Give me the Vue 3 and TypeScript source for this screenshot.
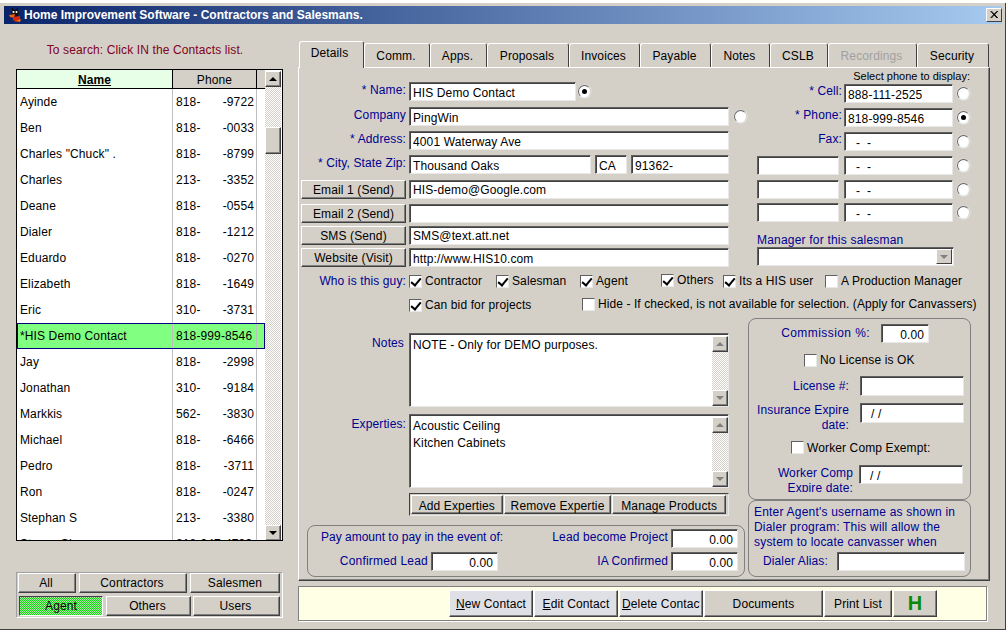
<script setup lang="ts">
interface Contact { name: string; a: string; b: string; selected?: boolean }
const contacts: Contact[] = [
  { name: 'Ayinde', a: '818-', b: '-9722' },
  { name: 'Ben', a: '818-', b: '-0033' },
  { name: 'Charles "Chuck" .', a: '818-', b: '-8799' },
  { name: 'Charles', a: '213-', b: '-3352' },
  { name: 'Deane', a: '818-', b: '-0554' },
  { name: 'Dialer', a: '818-', b: '-1212' },
  { name: 'Eduardo', a: '818-', b: '-0270' },
  { name: 'Elizabeth', a: '818-', b: '-1649' },
  { name: 'Eric', a: '310-', b: '-3731' },
  { name: '*HIS Demo Contact', a: '818-999-8546', b: '', selected: true },
  { name: 'Jay', a: '818-', b: '-2998' },
  { name: 'Jonathan', a: '310-', b: '-9184' },
  { name: 'Markkis', a: '562-', b: '-3830' },
  { name: 'Michael', a: '818-', b: '-6466' },
  { name: 'Pedro', a: '818-', b: '-3711' },
  { name: 'Ron', a: '818-', b: '-0247' },
  { name: 'Stephan S', a: '213-', b: '-3380' },
  { name: 'Stacey Sl', a: '818-947-4793', b: '' }
]
const tabs = [
  { label: 'Details', w: 65, active: true },
  { label: 'Comm.', w: 66 },
  { label: 'Apps.', w: 57 },
  { label: 'Proposals', w: 82 },
  { label: 'Invoices', w: 71 },
  { label: 'Payable', w: 71 },
  { label: 'Notes', w: 59 },
  { label: 'CSLB', w: 58 },
  { label: 'Recordings', w: 89, disabled: true },
  { label: 'Security', w: 72 }
]
</script>

<template>
  <div class="window">
    <div class="titlebar">
      <svg class="appicon" viewBox="0 0 16 16" width="16" height="16">
        <path d="M5 1 7 4M11 1 9 4" stroke="#000" stroke-width="1" fill="none" />
        <ellipse cx="8" cy="6" rx="4" ry="3.5" fill="#111" />
        <circle cx="6.5" cy="5" r="1" fill="#fff" />
        <circle cx="9.5" cy="5" r="1" fill="#fff" />
        <path d="M2 8 8 7 7 11 3 10Z" fill="#f06010" />
        <path d="M6 10 13 9 13 13 9 15 6 13Z" fill="#d82808" />
        <path d="M9 14 13 15 14 12Z" fill="#f08010" />
      </svg>
      <span class="title">Home Improvement Software - Contractors and Salesmans.</span>
      <span class="close">
        <svg viewBox="0 0 16 14" width="14" height="12"><path d="M4 2.5 11.5 10.5M5 2.5 12.5 10.5M11.5 2.5 4 10.5M12.5 2.5 5 10.5" stroke="#000" stroke-width="1.1" /></svg>
      </span>
    </div>

    <div class="main">
      <aside class="left">
        <div class="search">To search: Click IN the Contacts list.</div>
        <div class="table">
          <div class="list">
            <div class="thead">
              <div class="th-name">Name</div>
              <div class="th-phone">Phone</div>
            </div>
            <div v-for="c in contacts" :key="c.name" class="trow" :class="{ sel: c.selected }">
              <div class="td-name">{{ c.name }}</div>
              <div class="td-phone"><span>{{ c.a }}</span><span>{{ c.b }}</span></div>
            </div>
          </div>
          <div class="vscroll main-scroll">
            <div class="sbtn"><i class="tri up"></i></div>
            <div class="track-a"></div>
            <div class="thumb"></div>
            <div class="track-b"></div>
            <div class="sbtn"><i class="tri down"></i></div>
          </div>
        </div>
        <div class="filters">
          <div class="f-row f1">
            <button class="btn f-all">All</button>
            <button class="btn f-con">Contractors</button>
            <button class="btn f-sal">Salesmen</button>
          </div>
          <div class="f-row f2">
            <button class="btn f-agent">Agent</button>
            <button class="btn f-oth">Others</button>
            <button class="btn f-usr">Users</button>
          </div>
        </div>
      </aside>

      <section class="right">
        <div class="tabs">
          <div
            v-for="t in tabs"
            :key="t.label"
            class="tab"
            :class="{ active: t.active, disabled: t.disabled }"
            :style="{ width: t.w + 'px' }"
          >{{ t.label }}</div>
        </div>

        <div class="panel">
          <div class="upper">
            <div class="form">
              <div class="frow">
                <label class="lbl">* Name:</label>
                <div class="inp w-name">HIS Demo Contact</div>
                <span class="radio on r-name"></span>
              </div>
              <div class="frow">
                <label class="lbl">Company</label>
                <div class="inp w-full">PingWin</div>
                <span class="radio r-comp"></span>
              </div>
              <div class="frow">
                <label class="lbl">* Address:</label>
                <div class="inp w-full">4001 Waterway Ave</div>
              </div>
              <div class="frow">
                <label class="lbl">* City, State Zip:</label>
                <div class="inp w-city">Thousand Oaks</div>
                <div class="inp w-st">CA</div>
                <div class="inp w-zip">91362-</div>
              </div>
              <div class="frow">
                <button class="btn sidebtn">Email 1 (Send)</button>
                <div class="inp w-full high">HIS-demo@Google.com</div>
              </div>
              <div class="frow">
                <button class="btn sidebtn">Email 2 (Send)</button>
                <div class="inp w-full"></div>
              </div>
              <div class="frow">
                <button class="btn sidebtn">SMS (Send)</button>
                <div class="inp w-full high">SMS@text.att.net</div>
              </div>
              <div class="frow">
                <button class="btn sidebtn">Website (Visit)</button>
                <div class="inp w-full">http://www.HIS10.com</div>
              </div>
            </div>

            <div class="phones">
              <div class="select-label">Select phone to display:</div>
              <div class="pgrid">
                <div class="prow">
                  <label class="plbl">* Cell:</label>
                  <div class="inp w-ph">888-111-2525</div>
                  <span class="radio"></span>
                </div>
                <div class="prow">
                  <label class="plbl">* Phone:</label>
                  <div class="inp w-ph">818-999-8546</div>
                  <span class="radio on"></span>
                </div>
                <div class="prow">
                  <label class="plbl">Fax:</label>
                  <div class="inp w-ph dash">- &nbsp;-</div>
                  <span class="radio"></span>
                </div>
                <div class="prow">
                  <div class="inp w-ph2"></div>
                  <div class="inp w-ph dash">- &nbsp;-</div>
                  <span class="radio"></span>
                </div>
                <div class="prow">
                  <div class="inp w-ph2"></div>
                  <div class="inp w-ph dash">- &nbsp;-</div>
                  <span class="radio"></span>
                </div>
                <div class="prow">
                  <div class="inp w-ph2"></div>
                  <div class="inp w-ph dash">- &nbsp;-</div>
                  <span class="radio"></span>
                </div>
              </div>
              <div class="mgr-label">Manager for this salesman</div>
              <div class="inp combo">
                <span class="combo-btn"><i class="tri down gray"></i></span>
              </div>
            </div>
          </div>

          <div class="who-row first">
            <label class="who-lbl">Who is this guy:</label>
            <div class="cb w87"><span class="box on"></span>Contractor</div>
            <div class="cb w84"><span class="box on"></span>Salesman</div>
            <div class="cb w81"><span class="box on"></span>Agent</div>
            <div class="cb w62 raised"><span class="box on"></span>Others</div>
            <div class="cb w102"><span class="box on"></span>Its a HIS user</div>
            <div class="cb"><span class="box"></span>A Production Manager</div>
          </div>
          <div class="who-row second">
            <label class="who-lbl"></label>
            <div class="cb w173"><span class="box on"></span>Can bid for projects</div>
            <div class="cb raised tight"><span class="box"></span>Hide - If checked, is not available for selection. (Apply for Canvassers)</div>
          </div>

          <div class="lower">
            <div class="lower-left">
              <div class="area-row notes">
                <label class="lbl area-lbl notes-lbl">Notes</label>
                <div class="inp area">
                  <div class="area-text">NOTE - Only for DEMO purposes.</div>
                  <div class="vscroll">
                    <div class="sbtn"><i class="tri up gray"></i></div>
                    <div class="track-fill"></div>
                    <div class="sbtn"><i class="tri down gray"></i></div>
                  </div>
                </div>
              </div>
              <div class="area-row exp">
                <label class="lbl area-lbl">Experties:</label>
                <div class="inp area">
                  <div class="area-text">Acoustic Ceiling<br />Kitchen Cabinets</div>
                  <div class="vscroll">
                    <div class="sbtn"><i class="tri up gray"></i></div>
                    <div class="track-fill"></div>
                    <div class="sbtn"><i class="tri down gray"></i></div>
                  </div>
                </div>
              </div>
              <div class="exp-btns">
                <button class="btn eb1">Add Experties</button>
                <button class="btn eb2">Remove Expertie</button>
                <button class="btn eb3">Manage Products</button>
              </div>
              <div class="pay group">
                <div class="pay-row">
                  <span class="blue pay-title">Pay amount to pay in the event of:</span>
                  <div class="pay-item first-item">
                    <label class="blue">Lead become Project</label>
                    <div class="inp num w-pay">0.00</div>
                  </div>
                </div>
                <div class="pay-row second-pay">
                  <div class="pay-item">
                    <label class="blue conf-lbl">Confirmed Lead</label>
                    <div class="inp num w-pay">0.00</div>
                  </div>
                  <div class="pay-item">
                    <label class="blue">IA Confirmed</label>
                    <div class="inp num w-pay">0.00</div>
                  </div>
                </div>
              </div>
            </div>

            <div class="lower-right">
              <div class="group comm">
                <div class="c-row c-commission">
                  <label class="blue c-l1">Commission %:</label>
                  <div class="inp num w-comm">0.00</div>
                </div>
                <div class="cb c-nolic"><span class="box"></span>No License is OK</div>
                <div class="c-row c-lic">
                  <label class="blue c-l2 one">License #:</label>
                  <div class="inp w-lic tall"></div>
                </div>
                <div class="c-row c-ins">
                  <label class="blue c-l2 two">Insurance Expire<br />date:</label>
                  <div class="inp w-lic tall date">/ /</div>
                </div>
                <div class="cb c-exempt"><span class="box"></span>Worker Comp Exempt:</div>
                <div class="c-row c-wc">
                  <label class="blue c-l3 two">Worker Comp<br />Expire date:</label>
                  <div class="inp w-lic date">/ /</div>
                </div>
              </div>
              <div class="group dialer">
                <div class="blue dial-text">Enter Agent's username as shown in<br />Dialer program: This will allow the<br />system to locate canvasser when</div>
                <div class="dial-row">
                  <label class="blue dial-lbl">Dialer Alias:</label>
                  <div class="inp w-dial"></div>
                </div>
              </div>
            </div>
          </div>
        </div>

        <div class="actionbar">
          <button class="btn act lite w84"><span><u>N</u>ew Contact</span></button>
          <button class="btn act lite w84"><span><u>E</u>dit Contact</span></button>
          <button class="btn act lite w84 clip"><span><u>D</u>elete Contact</span></button>
          <button class="btn act w119"><span>Documents</span></button>
          <button class="btn act w68"><span>Print List</span></button>
          <button class="btn act w44 h"><span>H</span></button>
        </div>
      </section>
    </div>
  </div>
</template>

<style>
html, body { margin: 0; background: #fff; }
</style>

<style scoped>
* { box-sizing: border-box; }
.window {
  width: 1006px;
  height: 627px;
  margin-top: 3px;
  padding-top: 3px;
  background: #d4d0c8;
  border-right: 1px solid #404040;
  border-bottom: 1px solid #404040;
  font-family: "Liberation Sans", Arial, sans-serif;
  font-size: 12px;
  letter-spacing: 0.12px;
  color: #000;
  overflow: hidden;
}
.titlebar {
  margin-left: 4px;
  width: 998px;
  height: 18px;
  display: flex;
  align-items: center;
  background: linear-gradient(90deg, #0a246a, #a6caf0);
  position: relative;
}
.appicon { margin-left: 3px; flex: none; }
.title {
  margin-left: 1px;
  color: #fff;
  font-weight: bold;
  font-size: 12px;
  letter-spacing: 0;
}
.close {
  position: absolute;
  right: 0;
  top: 2px;
  width: 16px;
  height: 14px;
  background: #d4d0c8;
  border: 1px solid;
  border-color: #fff #404040 #404040 #fff;
  display: flex;
  align-items: center;
  justify-content: center;
}
.main { display: flex; }
.left { width: 298px; flex: none; padding-left: 16px; }
.search {
  height: 45px;
  padding-top: 19px;
  width: 258px;
  text-align: center;
  color: #800020;
  line-height: 14px;
}
.table {
  width: 267px;
  height: 472px;
  border: 1px solid #000;
  display: flex;
  overflow: hidden;
  background: #fff;
}
.list { width: 248px; flex: none; }
.thead { display: flex; height: 19px; border-bottom: 1px solid #000; background: #d4d0c8; }
.th-name {
  width: 156px;
  background: #e6ffe6;
  border-right: 1px solid #000;
  text-align: center;
  font-weight: bold;
  text-decoration: underline;
  line-height: 20px;
}
.th-phone { width: 84px; border-right: 1px solid #000; text-align: center; line-height: 20px; }
.trow { display: flex; height: 26px; line-height: 26px; width: 248px; }
.td-name { width: 156px; padding-left: 3px; border-right: 1px solid #c0c0c0; white-space: nowrap; overflow: hidden; }
.td-phone {
  width: 84px;
  padding: 0 2px 0 3px;
  border-right: 1px solid #c0c0c0;
  display: flex;
  justify-content: space-between;
  white-space: nowrap;
}
.trow.sel {
  background: #80ff80;
  outline: 1px solid #000080;
  outline-offset: -1px;
}
.vscroll { display: flex; flex-direction: column; width: 16px; flex: none; }
.main-scroll { margin-top: 1px; height: 470px; }
.track-a { height: 40px; background: repeating-conic-gradient(#d4d0c8 0 25%, #fff 0 50%) 0 0 / 2px 2px; }
.track-b { flex: 1; background: repeating-conic-gradient(#d4d0c8 0 25%, #fff 0 50%) 0 0 / 2px 2px; }
.track-fill { flex: 1; background: repeating-conic-gradient(#d4d0c8 0 25%, #fff 0 50%) 0 0 / 2px 2px; }
.thumb, .sbtn {
  background: #d4d0c8;
  border: 1px solid;
  border-color: #fff #404040 #404040 #fff;
  box-shadow: inset -1px -1px 0 #808080;
  flex: none;
}
.thumb { height: 27px; }
.sbtn { height: 16px; display: flex; align-items: center; justify-content: center; }
.tri { display: block; width: 0; height: 0; border-left: 4px solid transparent; border-right: 4px solid transparent; }
.tri.up { border-bottom: 4px solid #000; }
.tri.down { border-top: 4px solid #000; }
.tri.up.gray { border-bottom-color: #808080; }
.tri.down.gray { border-top-color: #808080; }

.filters {
  margin-top: 31px;
  width: 267px;
  height: 46px;
  border: 1px solid;
  border-color: #a0a0a0 #fff #fff #a0a0a0;
}
.f-row { display: flex; }
.f1 { padding: 0 0 0 1px; }
.f2 { margin-top: 3px; padding-left: 2px; }
.btn {
  font: inherit;
  letter-spacing: inherit;
  color: #000;
  background: #d4d0c8;
  border: 1px solid;
  border-color: #fff #404040 #404040 #fff;
  box-shadow: inset -1px -1px 0 #808080;
  padding: 0;
  margin: 0;
  white-space: nowrap;
  overflow: hidden;
}
.f-all { width: 58px; height: 20px; margin-right: 3px; padding-right: 2px; }
.f-con { width: 108px; height: 20px; margin-right: 3px; padding-right: 2px; }
.f-sal { width: 90px; height: 20px; }
.f-agent {
  width: 84px;
  height: 20px;
  margin-right: 3px;
  border-color: #404040 #fff #fff #404040;
  box-shadow: none;
  background: repeating-conic-gradient(#10d810 0 25%, #b0eca8 0 50%) 0 0 / 2px 2px;
}
.f-oth { width: 85px; height: 20px; margin-right: 2px; padding-right: 2px; }
.f-usr { width: 87px; height: 20px; padding-right: 2px; }

.right { width: 692px; flex: none; padding-top: 17px; }
.tabs { display: flex; align-items: flex-end; height: 26px; padding-left: 1px; position: relative; z-index: 1; }
.tab {
  height: 24px;
  background: #d4d0c8;
  border: 1px solid;
  border-color: #fff #404040 transparent #fff;
  border-bottom: none;
  border-radius: 3px 3px 0 0;
  text-align: center;
  line-height: 25px;
  flex: none;
  padding-right: 2px;
}
.tab.active { height: 27px; margin-bottom: -1px; line-height: 23px; padding-right: 4px; }
.tab.disabled { color: #a0a0a0; }
.panel {
  height: 514px;
  border: 1px solid;
  border-color: #fff #404040 #404040 #fff;
  box-shadow: inset -1px -1px 0 #808080;
}
.upper { display: flex; height: 199px; }
.form {
  width: 458px;
  flex: none;
  padding-top: 14px;
  display: grid;
  grid-template-rows: 25px 24px 24px 25px 24px 22px 22px 19px;
}
.frow { display: flex; align-items: flex-start; }
.lbl, .plbl, .who-lbl, .blue { color: #000090; }
.lbl { width: 107px; flex: none; text-align: right; line-height: 14px; padding-top: 1px; margin-right: 3px; white-space: nowrap; }
.inp {
  height: 19px;
  flex: none;
  background: #fff;
  border: 1px solid;
  border-color: #606060 #e8e8e8 #e8e8e8 #606060;
  box-shadow: inset 1px 1px 0 #404040;
  display: flex;
  align-items: center;
  padding: 2px 2px 0 3px;
  white-space: nowrap;
  overflow: hidden;
}
.inp.high { padding-top: 0; }
.w-name { width: 167px; }
.w-full { width: 320px; }
.w-city { width: 182px; margin-right: 4px; }
.w-st { width: 32px; margin-right: 4px; }
.w-zip { width: 98px; }
.r-name { margin-left: 2px; }
.r-comp { margin-left: 5px; }
.sidebtn { width: 105px; height: 19px; margin-left: 2px; margin-right: 3px; flex: none; }
.radio {
  width: 13px;
  height: 13px;
  flex: none;
  border-radius: 50%;
  background: #fff;
  border: 1px solid;
  border-color: #606060 #d4d0c8 #e8e8e8 #606060;
  box-shadow: 0 0 0 0.5px #e8e8e8;
  margin-top: 3px;
  position: relative;
}
.radio.on::after {
  content: "";
  position: absolute;
  left: 3px;
  top: 3px;
  width: 5px;
  height: 5px;
  border-radius: 50%;
  background: #000;
}
.phones { width: 213px; flex: none; padding-top: 1px; }
.select-label { height: 14px; line-height: 14px; text-align: right; font-size: 11px; margin-bottom: 1px; letter-spacing: 0; }
.pgrid { display: grid; grid-template-rows: 24px 24px 24px 24px 23px 19px; }
.prow { display: flex; align-items: flex-start; }
.plbl { width: 85px; flex: none; text-align: right; margin-right: 2px; line-height: 14px; }
.w-ph { width: 109px; }
.w-ph2 { width: 82px; margin-right: 5px; }
.prow .radio { margin-left: 4px; }
.dash { padding-left: 11px; }
.mgr-label { color: #000090; margin-top: 11px; line-height: 14px; letter-spacing: 0.2px; }
.combo { width: 197px; position: relative; }
.combo-btn {
  position: absolute;
  right: 1px;
  top: 1px;
  width: 16px;
  height: 15px;
  background: #d4d0c8;
  border: 1px solid;
  border-color: #fff #404040 #404040 #fff;
  display: flex;
  align-items: center;
  justify-content: center;
}
.who-row { display: flex; height: 15px; align-items: flex-start; line-height: 15px; }
.who-row.first { margin-top: 6px; }
.who-row.second { margin-top: 9px; }
.who-lbl { width: 107px; flex: none; text-align: right; margin-right: 3px; margin-top: 1px; white-space: nowrap; }
.cb { display: flex; align-items: center; white-space: nowrap; margin-top: 1px; height: 14px; line-height: 14px; flex: none; }
.cb.raised { margin-top: 0; }
.cb.tight { letter-spacing: 0.08px; }
.w87 { width: 87px; }
.w84 { width: 84px; }
.w81 { width: 81px; }
.w62 { width: 62px; }
.w102 { width: 102px; }
.w173 { width: 173px; }
.box {
  width: 13px;
  height: 13px;
  flex: none;
  background: #fff;
  border: 1px solid;
  border-color: #606060 #e8e8e8 #e8e8e8 #606060;
  margin-right: 3px;
  position: relative;
}
.box.on::after {
  content: "";
  position: absolute;
  left: 3px;
  top: 0px;
  width: 4px;
  height: 8px;
  border: solid #000;
  border-width: 0 2px 2px 0;
  transform: rotate(40deg);
}
.lower { display: flex; margin-top: 6px; }
.lower-left { width: 449px; flex: none; padding-top: 15px; }
.lower-right { width: 223px; flex: none; }
.area-row { display: flex; align-items: flex-start; height: 74px; }
.exp { margin-top: 7px; }
.area-lbl { padding-top: 3px; }
.notes-lbl { padding-right: 2px; }
.area { width: 320px; height: 74px; align-items: stretch; padding: 2px 0 0 3px; justify-content: space-between; }
.area-text { line-height: 17px; padding-top: 1px; }
.exp-btns {
  margin: 5px 0 0 110px;
  width: 320px;
  height: 23px;
  display: flex;
  gap: 1px;
  padding: 1px 2px 1px 1px;
  border: 1px solid;
  border-color: #404040 #e8e8e8 #e8e8e8 #404040;
}
.eb1 { width: 92px; padding-top: 2px; }
.eb2 { width: 108px; padding-top: 2px; }
.eb3 { width: 114px; padding-top: 2px; }
.group { border: 1px solid #808080; border-radius: 8px; }
.pay { margin: 9px 0 0 8px; width: 438px; height: 52px; padding: 3px 6px 0 0; }
.pay-row { display: flex; justify-content: space-between; align-items: flex-start; height: 19px; }
.second-pay { margin-top: 4px; }
.pay-title { margin-left: 13px; line-height: 17px; letter-spacing: 0; }
.pay-item { display: flex; align-items: flex-start; gap: 3px; }
.pay-item label { line-height: 19px; white-space: nowrap; }
.pay-item.first-item label { line-height: 17px; }
.conf-lbl { width: 120px; text-align: right; letter-spacing: 0.2px; }
.w-pay { width: 67px; }
.num { justify-content: flex-end; padding-right: 4px; }
.comm { height: 182px; padding-top: 5px; overflow: hidden; }
.c-row { display: flex; align-items: flex-start; }
.c-l1 { width: 121px; text-align: right; margin-right: 11px; line-height: 19px; letter-spacing: 0.42px; }
.w-comm { width: 48px; }
.c-nolic { margin: 10px 0 0 55px; }
.c-lic { margin-top: 9px; }
.c-l2 { width: 100px; text-align: right; margin-right: 11px; line-height: 18px; }
.c-l2.one { line-height: 20px; height: 20px; }
.c-l2.two { line-height: 15px; height: 30px; white-space: nowrap; }
.w-lic { width: 104px; }
.tall { height: 20px; }
.c-ins { margin-top: 7px; }
.c-exempt { margin: 8px 0 0 42px; height: 13px; }
.c-wc { margin-top: 11px; }
.c-l3 { width: 104px; text-align: right; margin-right: 6px; line-height: 15px; height: 27px; overflow: hidden; padding-top: 1px; }
.date { padding-left: 10px; }
.dialer { height: 77px; padding: 4px 0 0 5px; }
.dial-text { line-height: 15px; white-space: nowrap; letter-spacing: 0.2px; }
.dial-row { display: flex; align-items: flex-start; margin: 0 0 0 9px; padding-top: 2px; }
.dial-lbl { width: 74px; line-height: 18px; white-space: nowrap; }
.w-dial { width: 128px; }
.actionbar {
  margin-top: 5px;
  width: 689px;
  height: 35px;
  background: #ffffe6;
  border: 1px solid #808080;
  box-shadow: 1px 1px 0 #fff;
  display: flex;
  gap: 1px;
  padding: 3px 0 0 150px;
}
.act { height: 27px; flex: none; }
.lite { background: #dfdfe6; }
.w119 { width: 119px; }
.w68 { width: 68px; }
.w44 { width: 44px; }
.clip { text-align: left; padding-left: 2px; }
.clip span { display: block; width: 78px; overflow: hidden; }
.h { color: #0a8a0a; font-weight: bold; font-size: 20px; }
</style>
